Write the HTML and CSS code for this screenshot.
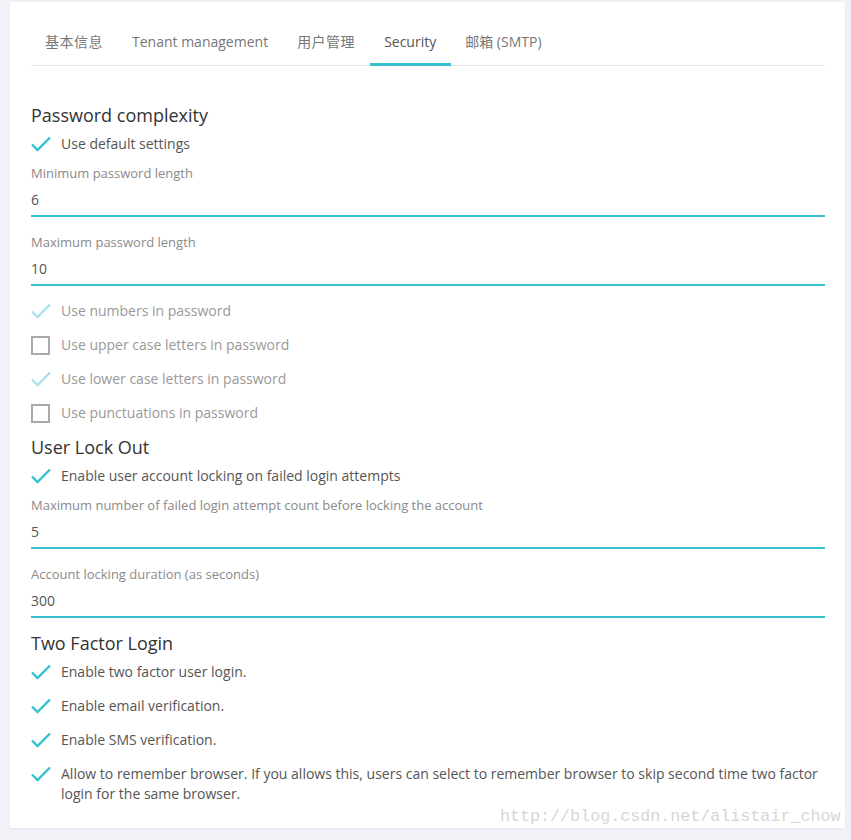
FILE: index.html
```html
<!DOCTYPE html>
<html lang="en">
<head>
<meta charset="UTF-8">
<meta name="viewport" content="width=device-width, initial-scale=1.0">
<title>Settings - Security</title>
<link rel="stylesheet" href="styles.css">
</head>
<body>
<div class="card">
<ul class="tabs">
<li class="tab cjk">基本信息</li>
<li class="tab">Tenant management</li>
<li class="tab cjk">用户管理</li>
<li class="tab active">Security</li>
<li class="tab">邮箱 (SMTP)</li>
</ul>

<div class="tab-content">
<h4 class="section-title first">Password complexity</h4>
<div class="check-row">
<span class="check-icon"><svg width="20" height="16" viewBox="0 0 20 16"><polyline points="1,8.5 6.5,14 19,1.5"/></svg></span>
<span class="check-text">Use default settings</span>
</div>
<div class="form-group">
<label>Minimum password length</label>
<div class="field">6</div>
</div>
<div class="form-group">
<label>Maximum password length</label>
<div class="field">10</div>
</div>
<div class="check-row disabled">
<span class="check-icon"><svg width="20" height="16" viewBox="0 0 20 16"><polyline points="1,8.5 6.5,14 19,1.5"/></svg></span>
<span class="check-text">Use numbers in password</span>
</div>
<div class="check-row disabled">
<span class="check-icon"><span class="box"></span></span>
<span class="check-text">Use upper case letters in password</span>
</div>
<div class="check-row disabled">
<span class="check-icon"><svg width="20" height="16" viewBox="0 0 20 16"><polyline points="1,8.5 6.5,14 19,1.5"/></svg></span>
<span class="check-text">Use lower case letters in password</span>
</div>
<div class="check-row disabled">
<span class="check-icon"><span class="box"></span></span>
<span class="check-text">Use punctuations in password</span>
</div>

<h4 class="section-title">User Lock Out</h4>
<div class="check-row">
<span class="check-icon"><svg width="20" height="16" viewBox="0 0 20 16"><polyline points="1,8.5 6.5,14 19,1.5"/></svg></span>
<span class="check-text">Enable user account locking on failed login attempts</span>
</div>
<div class="form-group">
<label>Maximum number of failed login attempt count before locking the account</label>
<div class="field">5</div>
</div>
<div class="form-group">
<label>Account locking duration (as seconds)</label>
<div class="field">300</div>
</div>

<h4 class="section-title">Two Factor Login</h4>
<div class="check-row">
<span class="check-icon"><svg width="20" height="16" viewBox="0 0 20 16"><polyline points="1,8.5 6.5,14 19,1.5"/></svg></span>
<span class="check-text">Enable two factor user login.</span>
</div>
<div class="check-row">
<span class="check-icon"><svg width="20" height="16" viewBox="0 0 20 16"><polyline points="1,8.5 6.5,14 19,1.5"/></svg></span>
<span class="check-text">Enable email verification.</span>
</div>
<div class="check-row">
<span class="check-icon"><svg width="20" height="16" viewBox="0 0 20 16"><polyline points="1,8.5 6.5,14 19,1.5"/></svg></span>
<span class="check-text">Enable SMS verification.</span>
</div>
<div class="check-row">
<span class="check-icon"><svg width="20" height="16" viewBox="0 0 20 16"><polyline points="1,8.5 6.5,14 19,1.5"/></svg></span>
<span class="check-text">Allow to remember browser. If you allows this, users can select to remember browser to skip second time two factor login for the same browser.</span>
</div>
</div>
</div>
<div class="watermark">http://blog.csdn.net/alistair_chow</div>
</body>
</html>
```

FILE: styles.css
```css
body {
    margin: 0;
    padding: 2px 0 12px 10px;
    background: #f1f2f7;
    font-family: "Open Sans", "Noto Sans CJK SC", sans-serif;
    color: #555;
}

.card {
    width: 835px;
    box-sizing: border-box;
    background: #fff;
    padding: 20px 20px 17px 21px;
    box-shadow: 0 1px 2px rgba(0, 0, 0, 0.05);
}

/* tabs */
.tabs {
    display: flex;
    list-style: none;
    margin: 0 0 0 -0.5px;
    padding: 0;
    border-bottom: 1px solid #e4e4e4;
}

.tab {
    padding: 10px 14.5px 11px;
    font-size: 14px;
    line-height: 20px;
    color: #777;
    border-bottom: 3px solid transparent;
    margin-bottom: -1px;
}

.tab.cjk {
    letter-spacing: 0.5px;
}

.tab.active {
    color: #555;
    border-bottom-color: #36c1cf;
}

/* content */
.tab-content {
    padding-top: 32px;
}

.section-title {
    margin: 0;
    padding-top: 5px;
    font-size: 18px;
    line-height: 24px;
    font-weight: normal;
    color: #333;
}

.check-row {
    display: flex;
    align-items: flex-start;
    padding: 7px 0;
    font-size: 14px;
    line-height: 20px;
    color: #555;
}

.check-icon {
    flex: 0 0 30px;
    height: 20px;
    display: flex;
    align-items: center;
}

.check-icon svg polyline {
    fill: none;
    stroke: #36c1cf;
    stroke-width: 2.4;
}

.check-row.disabled {
    color: #999;
}

.check-row.disabled svg polyline {
    stroke: #a6e2e9;
}

.box {
    display: block;
    width: 15px;
    height: 15px;
    border: 2px solid #aaa;
    margin-top: 1px;
}

.form-group {
    margin: 3px 0 8px;
}

.form-group + .form-group {
    margin-top: 16px;
}

.form-group label {
    display: block;
    font-size: 13px;
    line-height: 18px;
    color: #8a8a8a;
}

.field {
    padding: 8px 0 5px;
    font-size: 14px;
    line-height: 20px;
    color: #555;
    border-bottom: 2px solid #36c1cf;
}

.watermark {
    position: absolute;
    left: 500px;
    top: 807px;
    font-family: "Liberation Mono", monospace;
    font-size: 16.7px;
    color: #d6d6d6;
}
```
